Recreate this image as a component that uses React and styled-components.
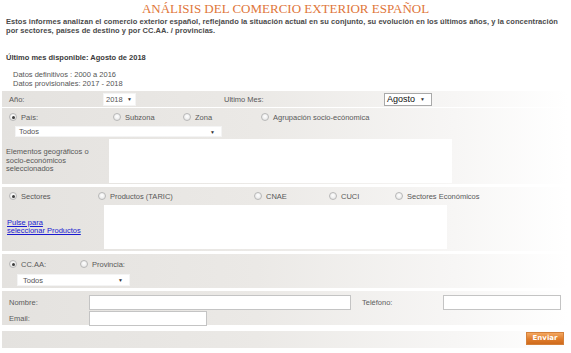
import React from "react";
import styled, { createGlobalStyle } from "styled-components";

const GlobalStyle = createGlobalStyle`
  body {
    margin: 0;
    background: #ffffff;
    font-family: "Liberation Sans", Arial, sans-serif;
  }
`;

const Page = styled.div`
  width: 571px;
  height: 353px;
  overflow: hidden;
`;

const Title = styled.h1`
  margin: 0;
  height: 17px;
  font-family: "Liberation Serif", "Times New Roman", serif;
  font-weight: normal;
  font-size: 13px;
  line-height: 17px;
  color: #e0763a;
  text-align: center;
`;

const Intro = styled.p`
  margin: 0;
  padding-left: 6px;
  font-size: 7.5px;
  line-height: 9px;
  font-weight: bold;
  color: #4a4a4a;
  white-space: nowrap;
  letter-spacing: 0.05px;
`;

const LastMonth = styled.p`
  margin: 18px 0 0;
  padding-left: 6px;
  font-size: 7.5px;
  line-height: 9px;
  font-weight: bold;
  color: #3a3a3a;
`;

const DataInfo = styled.div`
  margin: 9px 0 3px;
  padding-left: 13px;
  font-size: 7.5px;
  line-height: 8.5px;
  color: #555;
`;

const Form = styled.div`
  padding: 0 3px 0 2px;
`;

const Panel = styled.div`
  background: linear-gradient(to right, #e4e2df 0%, #ebe9e6 45%, #f7f6f5 80%, #ffffff 100%);
  margin-bottom: ${(p) => p.gap || 0}px;
  margin-top: ${(p) => p.top || 0}px;
  font-size: 7.5px;
  color: #585858;
`;

const Row = styled.div`
  display: flex;
  align-items: ${(p) => p.align || "center"};
  height: ${(p) => p.h}px;
`;

const Cell = styled.div`
  width: ${(p) => p.w}px;
  flex-shrink: 0;
  padding-left: ${(p) => p.pl || 0}px;
  box-sizing: border-box;
  display: flex;
  align-items: center;
`;

const Select = styled.div`
  width: ${(p) => p.w}px;
  height: ${(p) => p.h || 11}px;
  box-sizing: border-box;
  background: #fff;
  border: 1px solid ${(p) => (p.bordered ? "#a9a9a9" : "#f4f4f4")};
  display: flex;
  align-items: center;
  justify-content: space-between;
  padding: 0 ${(p) => p.pr || 6}px 0 ${(p) => p.pad || 3}px;
  font-size: ${(p) => p.fs || 7.5}px;
  color: ${(p) => p.color || "#555"};
  margin-left: ${(p) => p.ml || 0}px;
`;

const Caret = styled.span`
  font-size: 5px;
  color: #333;
`;

const RadioDot = styled.span`
  width: 8px;
  height: 8px;
  border-radius: 50%;
  box-sizing: border-box;
  border: 1px solid #b8b8b8;
  background: radial-gradient(circle at 50% 40%, #ffffff 0%, #e0e0e0 100%);
  margin-right: 4px;
  display: inline-flex;
  align-items: center;
  justify-content: center;
  &::after {
    content: "";
    width: 3px;
    height: 3px;
    border-radius: 50%;
    background: ${(p) => (p.checked ? "#3c3c3c" : "transparent")};
  }
`;

const Radio = ({ w, label, checked }) => (
  <Cell w={w}>
    <RadioDot checked={checked} />
    {label}
  </Cell>
);

const TwoCol = styled.div`
  display: flex;
  align-items: center;
  padding-top: ${(p) => p.pt || 0}px;
  padding-bottom: ${(p) => p.pb || 0}px;
`;

const SideLabel = styled.div`
  width: ${(p) => p.w}px;
  flex-shrink: 0;
  padding-left: ${(p) => p.pl || 4}px;
  box-sizing: border-box;
  line-height: 8.5px;
`;

const WhiteBox = styled.div`
  width: ${(p) => p.w}px;
  height: ${(p) => p.h}px;
  background: #fff;
`;

const Link = styled.a`
  color: #1a1ad0;
  text-decoration: underline;
  font-size: 7.5px;
  line-height: 8.5px;
  display: block;
`;

const ContactGrid = styled.div`
  display: grid;
  grid-template-columns: 87px 262px 92px 118px;
  grid-auto-rows: 16px;
  align-items: center;
  padding: 3px 0 0;
  height: 34px;
  box-sizing: border-box;
`;

const FieldLabel = styled.div`
  padding-left: ${(p) => p.pl || 7}px;
  color: #5c5c5c;
`;

const Input = styled.div`
  width: ${(p) => p.w}px;
  height: 15px;
  box-sizing: border-box;
  background: #fff;
  border: 1px solid #c4c4c4;
`;

const Footer = styled(Panel)`
  height: 17px;
  display: flex;
  justify-content: flex-end;
  align-items: flex-start;
  padding-right: 4px;
`;

const SendButton = styled.button`
  margin-top: 1px;
  width: 38px;
  height: 13px;
  padding: 0;
  border: 1px solid #d4803a;
  background: linear-gradient(to bottom, #f3a760 0%, #e07d2c 55%, #cf6a1c 100%);
  color: #fff;
  font-family: "DejaVu Sans", sans-serif;
  font-weight: bold;
  font-size: 7px;
  line-height: 11px;
`;

const App = () => (
  <Page>
    <GlobalStyle />
    <Title>ANÁLISIS DEL COMERCIO EXTERIOR ESPAÑOL</Title>
    <Intro>
      Estos informes analizan el comercio exterior español, reflejando la situación actual en su conjunto, su evolución en los últimos años, y la concentración
      <br />
      por sectores, países de destino y por CC.AA. / provincias.
    </Intro>
    <LastMonth>Último mes disponible: Agosto de 2018</LastMonth>
    <DataInfo>
      Datos definitivos : 2000 a 2016
      <br />
      Datos provisionales: 2017 - 2018
    </DataInfo>

    <Form>
      <Panel gap={1}>
        <Row h={16}>
          <Cell w={101} pl={7}>Año:</Cell>
          <Cell w={121}>
            <Select w={33} h={13} pad={2} pr={3}>
              2018 <Caret>▼</Caret>
            </Select>
          </Cell>
          <Cell w={160}>Ultimo Mes:</Cell>
          <Cell w={60}>
            <Select w={48} h={13} pad={2} fs={9} color="#111" bordered>
              Agosto <Caret>▼</Caret>
            </Select>
          </Cell>
        </Row>
      </Panel>

      <Panel>
        <Row h={18}>
          <Cell w={7} />
          <Radio w={104} label="País:" checked />
          <Radio w={70} label="Subzona" />
          <Radio w={78} label="Zona" />
          <Radio w={200} label="Agrupación socio-ecónomica" />
        </Row>
        <Row h={12} align="flex-start">
          <Select w={207} ml={13} pad={3}>
            Todos <Caret>▼</Caret>
          </Select>
        </Row>
        <TwoCol pt={1} pb={1}>
          <SideLabel w={107}>
            Elementos geográficos o
            <br />
            socio-económicos
            <br />
            seleccionados
          </SideLabel>
          <WhiteBox w={343} h={44} />
        </TwoCol>
      </Panel>

      <Panel gap={3} top={3}>
        <Row h={18}>
          <Cell w={7} />
          <Radio w={89} label="Sectores" checked />
          <Radio w={156} label="Productos (TARIC)" />
          <Radio w={75} label="CNAE" />
          <Radio w={66} label="CUCI" />
          <Radio w={120} label="Sectores Económicos" />
        </Row>
        <TwoCol pb={2}>
          <SideLabel w={102} pl={5}>
            <Link href="#">
              Pulse para
              <br />
              seleccionar Productos
            </Link>
          </SideLabel>
          <WhiteBox w={343} h={44} />
        </TwoCol>
      </Panel>

      <Panel gap={3}>
        <Row h={20}>
          <Cell w={7} />
          <Radio w={71} label="CC.AA:" checked />
          <Radio w={100} label="Provincia:" />
        </Row>
        <Row h={14} align="flex-start">
          <Select w={113} h={12} ml={15} pad={5}>
            Todos <Caret>▼</Caret>
          </Select>
        </Row>
      </Panel>

      <Panel gap={6}>
        <ContactGrid>
          <FieldLabel>Nombre:</FieldLabel>
          <Input w={262} />
          <FieldLabel pl={11}>Teléfono:</FieldLabel>
          <Input w={118} />
          <FieldLabel>Email:</FieldLabel>
          <Input w={118} />
        </ContactGrid>
      </Panel>

      <Footer>
        <SendButton>Enviar</SendButton>
      </Footer>
    </Form>
  </Page>
);

export default App;
